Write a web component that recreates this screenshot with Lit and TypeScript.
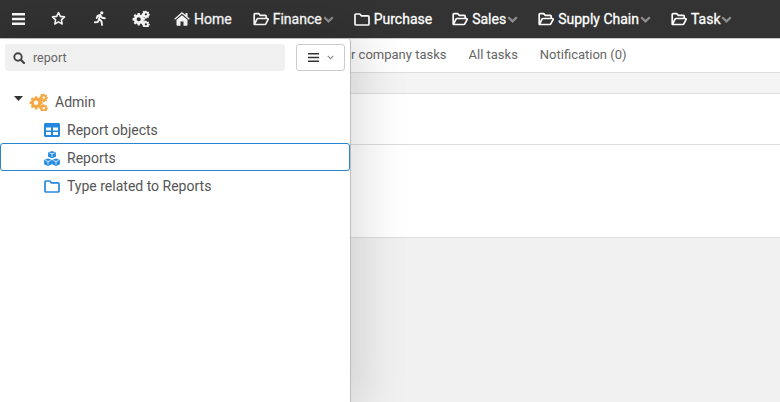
import { LitElement, html, css, svg } from "lit";
import { customElement } from "lit/decorators.js";

const folderOpen = svg`<path fill="none" stroke="currentColor" stroke-width="1.7" stroke-linejoin="round" d="M1.2 12.5V2.6c0-.5.4-.9.9-.9h3.600l1.600 1.700h5c.5 0 .9.4.9.9v1.900M1.400 12.400l2.600-5.300c.2-.4.5-.6.9-.6h9.500c.6 0 1 .6.7 1.100l-2.300 4.300c-.2.4-.5.6-.9.6H1.500z"/>`;
const folderClosed = svg`<path fill="none" stroke="currentColor" stroke-width="1.7" stroke-linejoin="round" d="M1 3c0-.6.4-1 1-1h3.800l1.700 1.800H14c.6 0 1 .4 1 1V12c0 .6-.4 1-1 1H2c-.6 0-1-.4-1-1z"/>`;
const cogs = svg`<path d="M7 3.200h2.200l.3 1.700 1 .4 1.400-1 1.600 1.600-1 1.400.4 1 1.700.3V11l-1.700.3-.4 1 1 1.400-1.600 1.600-1.400-1-1 .4-.3 1.700H7l-.3-1.700-1-.4-1.400 1-1.600-1.600 1-1.400-.4-1-1.700-.3V8.600l1.700-.3.4-1-1-1.400 1.600-1.600 1.400 1 1-.4zM8.100 7.600a2.200 2.200 0 1 0 0 4.400 2.200 2.200 0 0 0 0-4.400z" fill-rule="evenodd" fill="currentColor"/>
<path d="M15 .8h1.400l.2 1 .7.3.9-.5.9 1-.6.8.3.7 1 .2v1.400l-1 .2-.3.7.6.8-.9 1-.9-.5-.7.3-.2 1H15l-.2-1-.7-.3-.9.500-.9-1 .6-.8-.3-.7-1-.2V3.500l1-.2.3-.7-.6-.8.9-1 .9.5.7-.3zM15.700 3.400a1.200 1.200 0 1 0 0 2.400 1.200 1.200 0 0 0 0-2.400z" fill-rule="evenodd" fill="currentColor"/>
<path d="M15 11.300h1.400l.2 1 .7.3.9-.5.9 1-.6.8.3.7 1 .2v1.400l-1 .2-.3.7.6.8-.9 1-.9-.5-.7.3-.2 1H15l-.2-1-.7-.3-.9.500-.9-1 .6-.8-.3-.7-1-.2V14l1-.2.3-.7-.6-.8.9-1 .9.5.7-.3zM15.700 13.900a1.200 1.200 0 1 0 0 2.400 1.200 1.200 0 0 0 0-2.400z" fill-rule="evenodd" fill="currentColor"/>`;

const chevron = html`<svg class="chev" width="11" height="7" viewBox="0 0 11 7"><path d="M1.200 1.200 5.500 5.400 9.800 1.200" fill="none" stroke="currentColor" stroke-width="2.200"/></svg>`;

const cube = (x: number, y: number) => svg`<path d="M${x} ${y}l3.900 1.400v4.300L${x} ${y + 7.300}l-3.900-1.600V${y + 1.400}z" fill="currentColor"/><path d="M${x - 2.700} ${y + 1.900}L${x} ${y + 2.900}l2.700-1M${x} ${y + 3}v3" fill="none" stroke="#fff" stroke-width=".8"/>`;

const menus: [string, boolean, boolean, number][] = [
  ["Finance", true, true, 20],
  ["Purchase", false, false, 20],
  ["Sales", true, true, 20],
  ["Supply Chain", true, true, 20],
  ["Task", true, true, 0],
];

@customElement("app-root")
export class AppRoot extends LitElement {
  static styles = css`
    :host { display: block; width: 780px; height: 402px; position: relative; overflow: hidden;
      font-family: Roboto, "Liberation Sans", sans-serif; background: #f1f1f1; }
    .nav { height: 37px; padding-bottom: 1px; background: #333; border-bottom: 1px solid #c9c9c9; display: flex; align-items: center;
      color: #fff; font-size: 14px; font-weight: 400; -webkit-text-stroke: .3px #fff; padding-left: 12px; box-sizing: content-box; }
    .nav svg { display: block; flex: none; }
    .ic { color: #fff; }
    .star { margin-left: 26px; }
    .run { margin-left: 28px; }
    .cog { margin-left: 25px; }
    .home { margin-left: 24px; margin-right: 4px; }
    .homet { margin-right: 21px; }
    .menu { display: flex; align-items: center; }
    .menu .fo { margin-right: 4px; }
    .chev { color: #8e8e8e; margin-left: 1px; margin-top: 1px; }
    .tabs { height: 31px; padding-bottom: 2px; background: #fff; border-bottom: 1px solid #ddd; display: flex; align-items: center;
      gap: 22px; padding-left: 329px; font-size: 13px; color: #666; white-space: nowrap; }
    .band { height: 20px; background: #f4f4f4; border-bottom: 1px solid #ddd; }
    .row1 { height: 50px; background: #fff; border-bottom: 1px solid #ddd; }
    .row2 { height: 92px; background: #fff; border-bottom: 1px solid #ddd; }
    .panel { position: absolute; left: 0; top: 39px; bottom: 0; width: 350px; background: #fff;
      border-right: 1px solid #bdbdbd; box-shadow: 0 0 50px 10px rgba(0,0,0,.14); box-sizing: content-box;
      padding-top: 5px; border-top-right-radius: 3px; }
    .tools { display: flex; padding-left: 5px; }
    .search { width: 280px; height: 27px; background: #f0f0f0; border-radius: 3px; display: flex; align-items: center;
      padding-left: 8px; box-sizing: border-box; font-size: 12.5px; color: #666; }
    .search svg { margin-right: 8px; }
    .btn { margin-left: 11px; width: 49px; height: 27px; border: 1px solid #ccc; border-radius: 3px; box-sizing: border-box;
      display: flex; align-items: center; padding-left: 11px; gap: 8px; color: #333; }
    .tree { margin-top: 17px; font-size: 14px; color: #555; }
    .tr { height: 28px; display: flex; align-items: center; box-sizing: border-box; }
    .tr svg { flex: none; }
    .admin { padding-left: 14px; }
    .admin .caret { margin-right: 5px; margin-top: -7px; }
    .admin .org { color: #f5a742; margin-right: 7px; }
    .leaf { padding-left: 44px; }
    .leaf svg { color: #2488e0; margin-right: 7px; }
    .sel { border: 1px solid #2a85d0; border-radius: 3px; padding-left: 43px; padding-top: 2px; width: 350px; margin: -1px 0 1px; }
  `;

  render() {
    return html`
      <div class="nav">
        <svg width="13" height="12" viewBox="0 0 13 12"><path d="M0 0h13v2.400H0zM0 4.800h13v2.400H0zM0 9.600h13V12H0z" fill="#fff"/></svg>
        <svg class="star" width="15" height="15" viewBox="0 0 15 15"><path d="M7.500 1.500l1.800 3.900 4.200.5-3.100 2.900.8 4.200-3.700-2.100-3.700 2.100.8-4.200L1.500 5.900l4.200-.5z" fill="none" stroke="#fff" stroke-width="1.600" stroke-linejoin="round"/></svg>
        <svg class="run" width="12" height="15" viewBox="0 0 12 15"><circle cx="7.800" cy="1.800" r="1.600" fill="#fff"/><path d="M6.200 4 3.500 5 2.700 7M6.200 4 5 8l2.500 2.200L8 14M5 8.500 3.800 11 .8 11.300M6.500 4.500 8 6.700l2.800.6" fill="none" stroke="#fff" stroke-width="1.900" stroke-linecap="round" stroke-linejoin="round"/></svg>
        <svg class="cog ic" width="19" height="17" viewBox="0 0 20 18">${cogs}</svg>
        <svg class="home" width="16" height="14" viewBox="0 0 16 14"><path d="M8 0 .2 6.700l.8 1L8 1.800l7 5.900.8-1L13.500 4.700V1h-2v2L8 0zM8 3.200 2.500 7.800V13c0 .5.300.8.800.8h3.200V9.500h3v4.300h3.200c.5 0 .8-.3.800-.8V7.800z" fill="#fff"/></svg>
        <span class="homet">Home</span>
        ${menus.map(
          ([t, open, ch, m]) => html`<div class="menu" style="margin-right:${m}px">
            <svg class="fo" width="16" height="14" viewBox="0 0 16 14">${open ? folderOpen : folderClosed}</svg>
            <span>${t}</span>${ch ? chevron : ""}
          </div>`
        )}
      </div>
      <div class="tabs"><span>Your company tasks</span><span>All tasks</span><span>Notification (0)</span></div>
      <div class="band"></div>
      <div class="row1"></div>
      <div class="row2"></div>
      <div class="panel">
        <div class="tools">
          <div class="search">
            <svg width="12" height="12" viewBox="0 0 12 12"><circle cx="5" cy="5" r="3.700" fill="none" stroke="#444" stroke-width="1.900"/><path d="M7.800 7.800 11 11" stroke="#444" stroke-width="2.200" stroke-linecap="round"/></svg>
            <span>report</span>
          </div>
          <div class="btn">
            <svg width="11" height="9" viewBox="0 0 11 9"><path d="M0 0h11v1.600H0zM0 3.700h11v1.600H0zM0 7.400h11V9H0z" fill="#333"/></svg>
            <svg width="7" height="5" viewBox="0 0 7 5"><path d="M.7.800 3.500 3.600 6.300.8" fill="none" stroke="#888" stroke-width="1.100"/></svg>
          </div>
        </div>
        <div class="tree">
          <div class="tr admin">
            <svg class="caret" width="9" height="5" viewBox="0 0 9 5"><path d="M0 0h9L4.500 5z" fill="#333"/></svg>
            <svg class="org" width="20" height="18" viewBox="0 0 20 18">${cogs}</svg>
            <span>Admin</span>
          </div>
          <div class="tr leaf">
            <svg width="16" height="14" viewBox="0 0 16 14"><path fill-rule="evenodd" d="M1.500 0h13c.8 0 1.500.7 1.500 1.500v11c0 .8-.7 1.500-1.500 1.500h-13C.7 14 0 13.300 0 12.500v-11C0 .7.700 0 1.500 0zM2 4.500v3h5v-3zM9 4.500v3h5v-3zM2 9v3h5V9zM9 9v3h5V9z" fill="currentColor"/></svg>
            <span>Report objects</span>
          </div>
          <div class="tr leaf sel">
            <svg width="16" height="15" viewBox="0 0 16 15">${cube(8, 0)}${cube(4, 7.600)}${cube(12, 7.600)}</svg>
            <span>Reports</span>
          </div>
          <div class="tr leaf">
            <svg width="16" height="14" viewBox="0 0 16 14">${folderClosed}</svg>
            <span>Type related to Reports</span>
          </div>
        </div>
      </div>
    `;
  }
}
